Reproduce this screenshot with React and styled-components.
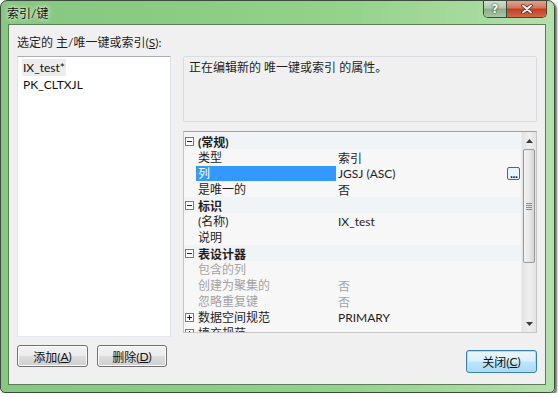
import React from 'react'
import styled, { createGlobalStyle } from 'styled-components';

const GlobalStyle = createGlobalStyle`
  body {
    margin: 0;
    background: #fff;
    font-family: Lato, "Noto Sans CJK SC", sans-serif;
    font-size: 12px;
    color: #1e1e1e;
  }
  * { box-sizing: border-box; }
`;

const rows = [
  { type: 'cat', label: '(常规)', open: true },
  { label: '类型', value: '索引' },
  { label: '列', value: 'JGSJ (ASC)', selected: true, more: true },
  { label: '是唯一的', value: '否' },
  { type: 'cat', label: '标识', open: true },
  { label: '(名称)', value: 'IX_test' },
  { label: '说明', value: '' },
  { type: 'cat', label: '表设计器', open: true },
  { label: '包含的列', value: '', disabled: true },
  { label: '创建为聚集的', value: '否', disabled: true },
  { label: '忽略重复键', value: '否', disabled: true },
  { label: '数据空间规范', value: 'PRIMARY', plus: true },
  { label: '填充规范', value: '', plus: true },
];

const Expander = ({ open }) => (
  <svg width="9" height="9" viewBox="0 0 9 9">
    <rect x="0.5" y="0.5" width="8" height="8" fill="#fff" stroke="#7a7a7a" />
    <path d="M2 4.5h5" stroke="#222" />
    {!open && <path d="M4.5 2v5" stroke="#222" />}
  </svg>
);

const App = () => {
  return (
    <>
      <GlobalStyle />
      <Window>
        <TitleBar>
          <Title>索引/键</Title>
          <CaptionButtons>
            <HelpBtn>?</HelpBtn>
            <CloseBtn>
              <svg width="12" height="10" viewBox="0 0 12 10">
                <path d="M2 1.5l8 7M10 1.5l-8 7" stroke="#5a1a10" strokeWidth="3.4" strokeLinecap="round" />
                <path d="M2 1.5l8 7M10 1.5l-8 7" stroke="#fff" strokeWidth="2" strokeLinecap="round" />
              </svg>
            </CloseBtn>
          </CaptionButtons>
        </TitleBar>
        <Client>
          <Label>选定的 主/唯一键或索引(<u>S</u>):</Label>
          <Body>
            <LeftCol>
              <List>
                <Item $current>IX_test*</Item>
                <Item>PK_CLTXJL</Item>
              </List>
              <ButtonRow>
                <Button $w={71}>添加(<u>A</u>)</Button>
                <Button $w={70}>删除(<u>D</u>)</Button>
              </ButtonRow>
            </LeftCol>
            <RightCol>
              <Desc>正在编辑新的 唯一键或索引 的属性。</Desc>
              <Grid>
                <Rows>
                  {rows.map((r, i) =>
                    r.type === 'cat' ? (
                      <CatRow key={i}>
                        <Gutter><Expander open={r.open} /></Gutter>
                        <CatLabel>{r.label}</CatLabel>
                      </CatRow>
                    ) : (
                      <PropRow key={i} $disabled={r.disabled}>
                        <Gutter>{r.plus && <Expander open={false} />}</Gutter>
                        <Name $selected={r.selected}>{r.label}</Name>
                        <Value>
                          <span>{r.value}</span>
                          {r.more && <MoreBtn>...</MoreBtn>}
                        </Value>
                      </PropRow>
                    )
                  )}
                </Rows>
                <ScrollBar>
                  <Arrow>
                    <svg width="7" height="4" viewBox="0 0 7 4"><path d="M0 4L3.5 0L7 4Z" fill="#3b3b3b" /></svg>
                  </Arrow>
                  <Thumb>
                    <Grip />
                  </Thumb>
                  <Track />
                  <Arrow>
                    <svg width="7" height="4" viewBox="0 0 7 4"><path d="M0 0L3.5 4L7 0Z" fill="#3b3b3b" /></svg>
                  </Arrow>
                </ScrollBar>
              </Grid>
              <Footer>
                <DefaultButton>关闭(<u>C</u>)</DefaultButton>
              </Footer>
            </RightCol>
          </Body>
        </Client>
      </Window>
    </>
  )
}

const Window = styled.div`
  width: 555px;
  height: 393px;
  border: 1px solid #3f4a3e;
  border-radius: 7px 7px 5px 5px;
  background: linear-gradient(90deg, #86c781 0%, #8ccd85 35%, #92d28a 60%, #a6da9c 85%, #b4e0ab 100%);
  box-shadow: 2px 2px 2px rgba(0, 0, 0, 0.55);
  display: flex;
  flex-direction: column;
  overflow: hidden;
`;

const TitleBar = styled.div`
  height: 23px;
  display: flex;
  align-items: flex-start;
  padding-left: 6px;
`;

const Title = styled.span`
  align-self: center;
  font-size: 12px;
  color: #111;
  text-shadow: 0 0 6px #e8f7e4, 0 0 3px #e8f7e4;
`;

const CaptionButtons = styled.div`
  margin-left: auto;
  margin-right: 7px;
  margin-top: -1px;
  display: flex;
  height: 18px;
  border: 1px solid #3c463c;
  border-top: none;
  border-radius: 0 0 5px 5px;
  overflow: hidden;
`;

const HelpBtn = styled.div`
  width: 23px;
  display: flex;
  align-items: center;
  justify-content: center;
  font-family: "DejaVu Sans", sans-serif;
  font-weight: bold;
  font-size: 12px;
  color: #fff;
  text-shadow: 0 0 2px #2f3b2f, 0 0 1px #2f3b2f;
  background: linear-gradient(#d3e2d1 0%, #b0c9ad 45%, #8fab8b 55%, #a9c6a4 100%);
  border-right: 1px solid #3c463c;
`;

const CloseBtn = styled.div`
  width: 39px;
  display: flex;
  align-items: center;
  justify-content: center;
  background: linear-gradient(#e6a898 0%, #d87460 45%, #c3401f 55%, #d0684c 100%);
`;

const Client = styled.div`
  margin: 0 8px 0 7px;
  height: 361px;
  background: #f0f0f0;
  border: 1px solid #5f7c5d;
  padding: 11px 8px 0 8px;
`;

const Label = styled.div`
  height: 14px;
  line-height: 14px;
  margin-bottom: 6px;
`;

const Body = styled.div`
  display: flex;
  gap: 12px;
`;

const LeftCol = styled.div`
  width: 154px;
  display: flex;
  flex-direction: column;
`;

const List = styled.div`
  height: 281px;
  background: #fff;
  border: 1px solid #abadb3;
  border-color: #abadb3 #dbdfe6 #e3e9ef #e2e3ea;
  padding: 2px 0 0 4px;
`;

const Item = styled.div`
  display: inline-block;
  height: 17px;
  line-height: 17px;
  padding: 0 1px;
  background: ${p => (p.$current ? '#ececec' : 'transparent')};
  width: ${p => (p.$current ? 'auto' : '100%')};
  color: #111;
`;

const ButtonRow = styled.div`
  margin-top: 8px;
  display: flex;
  gap: 9px;
`;

const Button = styled.div`
  width: ${p => p.$w}px;
  height: 22px;
  display: flex;
  align-items: center;
  justify-content: center;
  border: 1px solid #707070;
  border-radius: 3px;
  background: linear-gradient(#f2f2f2 0%, #ebebeb 48%, #dddddd 52%, #cfcfcf 100%);
  box-shadow: inset 0 0 0 1px #fcfcfc;
  color: #111;
`;

const DefaultButton = styled(Button)`
  width: 71px;
  height: 23px;
  border-color: #3c7fb1;
  background: linear-gradient(#eaf6fd 0%, #d9f0fc 48%, #bee6fd 52%, #a7d9f5 100%);
  box-shadow: inset 0 0 0 1px #a5e0fb;
`;

const RightCol = styled.div`
  width: 354px;
  display: flex;
  flex-direction: column;
`;

const Desc = styled.div`
  height: 66px;
  border: 1px solid #d9dde1;
  border-radius: 2px;
  padding: 4px 5px;
  line-height: 14px;
  background: #f0f0f0;
  margin-bottom: 9px;
`;

const Grid = styled.div`
  height: 202px;
  border: 1px solid #a9a9a9;
  border-color: #a0a0a0 #c6c6c6 #c6c6c6 #c6c6c6;
  display: flex;
  background: #f7f7f7;
`;

const Rows = styled.div`
  flex: 1;
  overflow: hidden;
  padding-top: 1px;
`;

const RowBase = styled.div`
  height: 16px;
  display: flex;
  align-items: center;
`;

const CatRow = styled(RowBase)`
  background: #f0f4f6;
`;

const PropRow = styled(RowBase)`
  color: ${p => (p.$disabled ? '#a3a3a3' : '#1e1e1e')};
`;

const Gutter = styled.div`
  width: 12px;
  padding-left: 1px;
  display: flex;
  align-items: center;
`;

const CatLabel = styled.div`
  font-weight: bold;
  padding-left: 2px;
`;

const Name = styled.div`
  width: 140px;
  height: 15px;
  line-height: 15px;
  padding-left: 2px;
  white-space: nowrap;
  background: ${p => (p.$selected ? '#3399ff' : 'transparent')};
  color: ${p => (p.$selected ? '#fff' : 'inherit')};
`;

const Value = styled.div`
  flex: 1;
  display: flex;
  justify-content: space-between;
  align-items: center;
  padding-left: 2px;
  padding-right: 1px;
  white-space: nowrap;
`;

const MoreBtn = styled.div`
  width: 13px;
  height: 13px;
  border: 1px solid #2d6ea3;
  border-radius: 2px;
  background: #eaf4fb;
  font-family: "DejaVu Sans", sans-serif;
  font-size: 9px;
  font-weight: bold;
  line-height: 14px;
  letter-spacing: -1px;
  text-align: center;
  color: #1a1a1a;
  overflow: hidden;
`;

const ScrollBar = styled.div`
  width: 15px;
  display: flex;
  flex-direction: column;
  background: linear-gradient(90deg, #e3e3e3, #efefef 50%, #e3e3e3);
  border-left: 1px solid #ececec;
`;

const Arrow = styled.div`
  height: 17px;
  display: flex;
  align-items: center;
  justify-content: center;
`;

const Thumb = styled.div`
  height: 114px;
  margin: 0 1px;
  border: 1px solid #999;
  border-radius: 2px;
  background: linear-gradient(90deg, #f3f3f3, #e8e8e8 50%, #d6d6d6);
  display: flex;
  align-items: center;
  justify-content: center;
`;

const Grip = styled.div`
  width: 6px;
  height: 7px;
  background: repeating-linear-gradient(#8a8a8a 0 1px, transparent 1px 2px);
`;

const Track = styled.div`
  flex: 1;
`;

const Footer = styled.div`
  margin-top: 17px;
  display: flex;
  justify-content: flex-end;
`;

export default App;
